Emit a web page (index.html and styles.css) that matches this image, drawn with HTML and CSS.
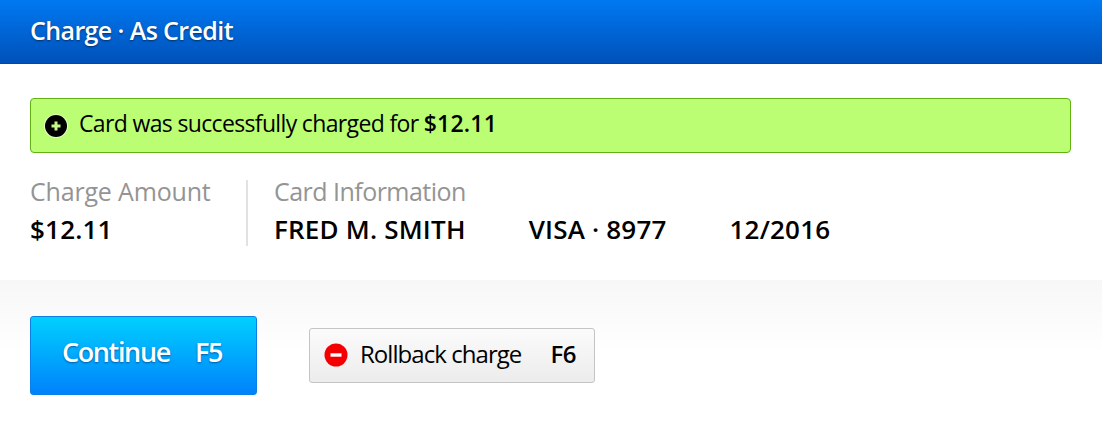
FILE: index.html
```html
<!DOCTYPE html>
<html lang="en">
<head>
    <meta charset="UTF-8">
    <title>Charge - As Credit</title>
    <link rel="stylesheet" href="styles.css">
</head>
<body>
    <!-- Title bar -->
    <header class="header">
        <h1>Charge · As Credit</h1>
    </header>

    <main class="content">
        <div class="alert">
            <svg class="alert-icon" viewBox="0 0 24 24" width="24" height="24">
                <circle cx="12" cy="12" r="12" fill="#e4ffc4"/>
                <circle cx="12" cy="12" r="11" fill="#000"/>
                <path d="M12 7.5v9M7.5 12h9" stroke="#c6f58a" stroke-width="3" fill="none"/>
            </svg>
            <p>Card was successfully charged for <span class="amount">$12.11</span></p>
        </div>

        <div class="details">
            <div class="detail detail-amount">
                <h2>Charge Amount</h2>
                <div class="values"><span>$12.11</span></div>
            </div>
            <div class="detail detail-card">
                <h2>Card Information</h2>
                <div class="values">
                    <span>FRED M. SMITH</span>
                    <span>VISA · 8977</span>
                    <span>12/2016</span>
                </div>
            </div>
        </div>
    </main>

    <!-- Buttons -->
    <footer class="actions">
        <a href="#" class="button button-primary">
            <span>Continue</span>
            <span>F5</span>
        </a>
        <a href="#" class="button button-secondary">
            <svg viewBox="0 0 24 24" width="24" height="24">
                <circle cx="12" cy="12" r="11.5" fill="#f50000"/>
                <path d="M6.5 12h11" stroke="#fff" stroke-width="3.4" fill="none"/>
            </svg>
            <span class="button-label">Rollback charge</span>
            <span class="button-key">F6</span>
        </a>
    </footer>
</body>
</html>
```

FILE: styles.css
```css
* {
    margin: 0;
    padding: 0;
    box-sizing: border-box;
}

body {
    font-family: "Open Sans", "Noto Sans", sans-serif;
    background: #fff;
    color: #000;
    height: 429px;
    overflow: hidden;
}

/* Title bar */
.header {
    height: 64px;
    padding: 0 30px 4px;
    display: flex;
    align-items: center;
    background: linear-gradient(#0079f2, #0051b9);
    border-bottom: 1px solid #0049ac;
}

.header h1 {
    font-size: 25px;
    font-weight: 600;
    letter-spacing: -0.6px;
    color: #fff;
    text-shadow: 0 1px 2px rgba(0, 0, 0, 0.5);
}

.content {
    padding: 34px 31px 0 30px;
    height: 216px;
}

/* Success message */
.alert {
    height: 55px;
    padding: 0 13px;
    display: flex;
    align-items: center;
    gap: 11px;
    background: #bbfe74;
    border: 1px solid #62b214;
    border-radius: 4px;
}

.alert p {
    font-size: 23px;
    letter-spacing: -0.65px;
    padding-bottom: 6px;
}

.alert .amount {
    font-weight: 600;
    letter-spacing: 0.2px;
}

/* Charge details */
.details {
    display: flex;
    margin-top: 27px;
}

.detail h2 {
    font-size: 25px;
    font-weight: 400;
    color: #949494;
    line-height: 22px;
    margin-bottom: 12px;
}

.detail-amount h2 {
    letter-spacing: -0.18px;
}

.detail-card h2 {
    letter-spacing: -0.53px;
}

.values {
    display: flex;
    gap: 63px;
    font-size: 26px;
    font-weight: 600;
    letter-spacing: 0.2px;
    line-height: 30px;
}

.detail-amount {
    width: 218px;
    height: 66px;
    border-right: 2px solid #e2e2e2;
}

.detail-card {
    padding-left: 26px;
}

/* Bottom buttons */
.actions {
    height: 149px;
    padding: 36px 0 0 30px;
    display: flex;
    align-items: flex-start;
    gap: 52px;
    background: linear-gradient(#f7f7f7, #fff 50%);
}

.button {
    display: flex;
    align-items: center;
    text-decoration: none;
    border-radius: 3px;
}

.button-primary {
    width: 227px;
    height: 79px;
    padding: 0 3px 8px 0;
    justify-content: center;
    gap: 25px;
    font-size: 27px;
    font-weight: 600;
    letter-spacing: -1.35px;
    color: #fff;
    background: linear-gradient(#00d0ff, #0082fb);
    border: 1px solid #0a7fe6;
    text-shadow: 0 1px 2px rgba(0, 40, 110, 0.6);
}

.button-secondary {
    width: 286px;
    height: 55px;
    margin-top: 12px;
    padding: 0 18px 2px 14px;
    font-size: 24px;
    color: #000;
    background: linear-gradient(#fbfbfb, #ececec);
    border: 1px solid #c4c4c4;
}

.button-secondary svg {
    flex: none;
}

.button-label {
    margin-left: 12px;
    padding-bottom: 2px;
    letter-spacing: -0.95px;
}

.button-key {
    margin-left: auto;
    padding-bottom: 2px;
    font-weight: 600;
    letter-spacing: -0.5px;
}
```
